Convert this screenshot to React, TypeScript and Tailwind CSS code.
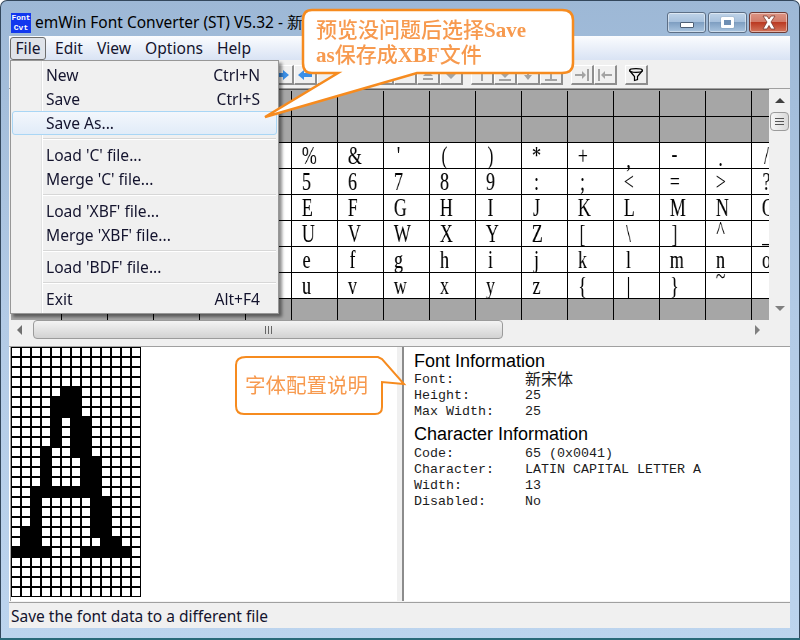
const sansFont = "font-['Noto_Sans',sans-serif]";

const gridChars = [
  " !\"#$%&'()*+,-./",
  "0123456789:;<=>?",
  "@ABCDEFGHIJKLMNO",
  "PQRSTUVWXYZ[\\]^_",
  "`abcdefghijklmno",
  "pqrstuvwxyz{|}~ ",
];

// these sit higher or lower in the bitmap font
const glyphShift: Record<string, string> = {
  "~": "-translate-y-[10px]",
  "^": "-translate-y-[3px]",
  ",": "translate-y-[4px]",
  ".": "translate-y-[2px]",
  "-": "-translate-y-[2px]",
};

// black pixels of the "A" preview, by row
const glyphA: Record<number, number[]> = {
  4: [5, 6],
  5: [4, 5, 6],
  6: [4, 5, 6],
  7: [4, 6, 7],
  8: [4, 6, 7],
  9: [4, 6, 7],
  10: [3, 6, 7],
  11: [3, 7, 8],
  12: [3, 7, 8],
  13: [3, 7, 8],
  14: [2, 3, 4, 5, 6, 7, 8],
  15: [2, 8, 9],
  16: [2, 8, 9],
  17: [2, 8, 9],
  18: [1, 2, 8, 9],
  19: [1, 2, 9, 10],
  20: [0, 1, 2, 3, 7, 8, 9, 10, 11],
};

const menu = [
  [["New", "Ctrl+N"], ["Save", "Ctrl+S"], ["Save As...", ""]],
  [["Load 'C' file...", ""], ["Merge 'C' file...", ""]],
  [["Load 'XBF' file...", ""], ["Merge 'XBF' file...", ""]],
  [["Load 'BDF' file...", ""]],
  [["Exit", "Alt+F4"]],
];

const toolPaths: Record<string, string> = {
  right: "M1 5h8V2l6 5-6 5V9H1z",
  left: "M15 5H7V2L1 7l6 5V9h8z",
  blank: "",
  upBar: "M8 3l5 5H3zM3 10h10v2H3z",
  downBar: "M3 2h10v2H3zM3 6h10l-5 5z",
  top: "M2 1h12v2H2zM7 3h2v10H7z",
  down2: "M7 1h2v5h3l-4 4-4-4h3zM2 11h12v2H2z",
  down: "M7 1h2v6h3l-4 5-4-5h3z",
  bottom: "M7 1h2v10H7zM2 11h12v2H2z",
  toRight: "M1 6h7V3l4 4-4 4V8H1zM13 1h2v12h-2z",
  toLeft: "M1 1h2v12H1zM15 6H8V3L4 7l4 4V8h7z",
};

const toolGroups = [
  [["right", "#3b8fe6"], ["left", "#3b8fe6"], ["blank", ""]],
  [["blank", ""], ["blank", ""], ["blank", ""], ["upBar", "#a3a3a3"], ["downBar", "#a3a3a3"]],
  [["top", "#a3a3a3"], ["down2", "#a3a3a3"], ["down", "#a3a3a3"], ["bottom", "#a3a3a3"]],
  [["toRight", "#a3a3a3"], ["toLeft", "#a3a3a3"]],
];

function ToolButton({ children }: { children?: React.ReactNode }) {
  return (
    <div className="flex h-5 w-[23px] items-center justify-center border-t border-l border-t-white border-l-white border-r-2 border-b-2 border-r-[#8e8e8e] border-b-[#8e8e8e] bg-[#f0f0f0]">
      {children}
    </div>
  );
}

function Toolbar() {
  return (
    <div className="flex h-[29px] gap-2 border-b border-[#a0a0a0] bg-[#f0f0f0] pt-[5px] pl-[262px]">
      {toolGroups.map((group, i) => (
        <div key={i} className="flex">
          {group.map(([icon, color], j) => (
            <ToolButton key={j}>
              {icon !== "blank" && (
                <svg width="16" height="14" viewBox="0 0 16 14">
                  <path d={toolPaths[icon]} fill={color} />
                </svg>
              )}
            </ToolButton>
          ))}
        </div>
      ))}
      <ToolButton>
        <svg width="16" height="16" viewBox="0 0 16 16" fill="none" stroke="#000" strokeWidth="1.2">
          <ellipse cx="8" cy="3.500" rx="6.500" ry="1.800" />
          <path d="M1.500 3.500L6.500 9.500V13.500L9.500 12.500V9.500L14.500 3.500" />
        </svg>
      </ToolButton>
    </div>
  );
}

function CharGrid() {
  const rows = [null, null, ...gridChars, null];
  return (
    <div className="h-[231px] w-[758px] overflow-hidden border-t border-[#5a5a5a] bg-[#a6a6a6]">
      <div className="h-px" />
      {rows.map((row, r) => (
        <div key={r} className={`flex h-[26px] w-[800px] border-b border-black ${row ? "bg-white" : "bg-[#a6a6a6]"}`}>
          <div className="w-[51px] shrink-0 border-r border-black" />
          {Array.from({ length: 16 }).map((_, c) => (
            <div key={c} className="h-full w-[46px] shrink-0 border-r border-black">
              {row && (
                <span
                  className={`ml-2 inline-block w-[13px] scale-x-[0.72] text-center font-['Liberation_Serif',serif] text-[25px] leading-[26px] whitespace-pre text-black will-change-transform ${glyphShift[row[c]] ?? ""}`}
                >
                  {row[c]}
                </span>
              )}
            </div>
          ))}
        </div>
      ))}
    </div>
  );
}

function VScroll() {
  return (
    <div className="flex w-[21px] flex-col items-center bg-[#f0f0f0]">
      <div className="flex h-[23px] items-center justify-center">
        <div className="h-0 w-0 border-x-[5px] border-b-[5px] border-x-transparent border-b-[#404040]" />
      </div>
      <div className="flex h-[19px] w-[19px] flex-col items-center justify-center gap-[2px] rounded-sm border border-[#9b9b9b] bg-gradient-to-r from-[#f6f6f6] to-[#d9d9d9]">
        <div className="h-px w-[9px] bg-[#555]" />
        <div className="h-px w-[9px] bg-[#555]" />
        <div className="h-px w-[9px] bg-[#555]" />
      </div>
      <div className="flex-1" />
      <div className="flex h-[24px] items-center justify-center">
        <div className="h-0 w-0 border-x-[5px] border-t-[5px] border-x-transparent border-t-[#808080]" />
      </div>
    </div>
  );
}

function HScroll() {
  return (
    <div className="flex h-[22px] items-start bg-[#f0f0f0]">
      <div className="flex h-[19px] w-[22px] items-center pl-[6px]">
        <div className="h-0 w-0 border-y-[5px] border-r-[5px] border-y-transparent border-r-[#707070]" />
      </div>
      <div className="flex h-[19px] w-[470px] items-center justify-center gap-[2px] rounded-sm border border-[#9b9b9b] bg-gradient-to-b from-[#f4f4f4] to-[#d2d2d2]">
        <div className="h-[8px] w-px bg-[#666]" />
        <div className="h-[8px] w-px bg-[#666]" />
        <div className="h-[8px] w-px bg-[#666]" />
      </div>
      <div className="flex-1" />
      <div className="mr-[21px] flex h-[19px] w-6 items-center justify-center">
        <div className="h-0 w-0 border-y-[5px] border-l-[5px] border-y-transparent border-l-[#808080]" />
      </div>
    </div>
  );
}

function Bitmap() {
  return (
    <div className="grid w-[130px] grid-cols-[repeat(13,8px)] gap-[2px] self-start bg-black p-px">
      {Array.from({ length: 25 * 13 }).map((_, i) => {
        const row = Math.floor(i / 13);
        const on = glyphA[row]?.includes(i % 13);
        return <div key={i} className={`h-2 w-2 ${on ? "bg-black" : "bg-white"}`} />;
      })}
    </div>
  );
}

function InfoRow({ label, value, cjk }: { label: string; value: string; cjk?: boolean }) {
  return (
    <div className="flex h-4 items-center font-['Liberation_Mono',monospace] text-[13.33px] leading-4 text-[#1c1c1c]">
      <span className="w-[111px] shrink-0 whitespace-pre">{label}</span>
      <span className={cjk ? "-translate-y-[2px] font-['Noto_Sans_CJK_SC',sans-serif] text-base" : "whitespace-pre"}>{value}</span>
    </div>
  );
}

function InfoPane() {
  const heading = "font-['Liberation_Sans',sans-serif] text-lg leading-5 text-black";
  return (
    <div className="flex-1 border-l-2 border-[#8c8c8c] bg-white pt-1 pl-[10px]">
      <div className={`${heading} mb-px`}>Font Information</div>
      <InfoRow label="Font:" value="新宋体" cjk />
      <InfoRow label="Height:" value="25" />
      <InfoRow label="Max Width:" value="25" />
      <div className={`${heading} mt-1 mb-[2px]`}>Character Information</div>
      <InfoRow label="Code:" value="65 (0x0041)" />
      <InfoRow label="Character:" value="LATIN CAPITAL LETTER A" />
      <InfoRow label="Width:" value="13" />
      <InfoRow label="Disabled:" value="No" />
    </div>
  );
}

function FileMenu() {
  return (
    <div className={`absolute top-[60px] left-[10px] flex h-[254px] w-[269px] flex-col border border-[#979797] bg-[#f0f0f0] pt-[2px] shadow-[3px_3px_3px_rgba(0,0,0,0.45)] ${sansFont}`}>
      <div className="absolute top-0 bottom-0 left-[30px] w-[2px] border-l border-[#e2e3e3] bg-white" />
      {menu.map((group, g) => (
        <div key={g} className="relative">
          {g > 0 && <div className="my-[3px] ml-[32px] mr-[2px] h-[2px] border-t border-[#d7d7d7] bg-white" />}
          {group.map(([label, shortcut]) => (
            <div
              key={label}
              className={`mx-px flex h-6 items-center justify-between pt-px text-[15.600px] text-[#14142e] ${
                label === "Save As..."
                  ? "rounded-[3px] border border-[#a9d6f5] bg-gradient-to-b from-[#f3f7fc] to-[#e1ecf8] pr-4 pl-[33px]"
                  : "pr-[17px] pl-[34px]"
              }`}
            >
              <span>{label}</span>
              <span>{shortcut}</span>
            </div>
          ))}
        </div>
      ))}
    </div>
  );
}

function WindowButtons() {
  const base = "flex h-[21px] w-[39px] items-center justify-center rounded-[3px] border shadow-[inset_0_0_0_1px_rgba(255,255,255,0.45)]";
  const blue = "border-[#5d6f86] bg-[linear-gradient(#c0d4e9_0%,#a6c0dc_48%,#7f9fc2_50%,#a9c4df_100%)]";
  return (
    <div className="flex gap-[2px] pt-[11px]">
      <div className={`${base} ${blue}`}>
        <div className="mt-[4px] h-[6px] w-[14px] rounded-[1px] border border-[#4d5f75] bg-white" />
      </div>
      <div className={`${base} ${blue}`}>
        <div className="flex h-[11px] w-[13px] items-center justify-center rounded-[1px] bg-white shadow-[0_0_1px_#4d5f75]">
          <div className="h-[5px] w-[7px] bg-[#6f8fb3]" />
        </div>
      </div>
      <div className={`${base} border-[#6e3b35] bg-[linear-gradient(#dc9484_0%,#d17a68_48%,#bb3a22_50%,#d3755c_100%)]`}>
        <svg width="18" height="15" viewBox="0 0 18 15">
          <path d="M3 1h4l2 3 2-3h4l-4 6 4 7h-4l-2-3.500L7 14H3l4-7z" fill="#fff" stroke="#7a3a30" strokeWidth="0.8" />
        </svg>
      </div>
    </div>
  );
}

function Callouts() {
  return (
    <>
      <svg className="pointer-events-none absolute top-0 left-0" width="800" height="640" viewBox="0 0 800 640">
        <path
          d="M312 10H562Q573 10 573 20V63Q573 73 562 73H417L265 117L338 73H312Q303 73 303 63V20Q303 10 312 10Z"
          fill="#fff"
          stroke="#f68b1f"
          strokeWidth="2.500"
        />
        <path
          d="M246 357H378L382 359L404 384L382 382V407Q382 414 375 414H244Q236 414 236 406V365Q236 357 246 357Z"
          fill="#fff"
          stroke="#f68b1f"
          strokeWidth="2"
        />
      </svg>
      <div className="absolute top-[18px] left-[316px] w-[230px] font-['Liberation_Serif','Noto_Sans_CJK_SC',serif] text-[21px] leading-[25px] font-medium text-[#f79a4f]">
        <div className="whitespace-nowrap">
          预览没问题后选择<span className="font-bold">Save</span>
        </div>
        <div className="whitespace-nowrap">
          <span className="font-bold">as</span>保存成<span className="font-bold">XBF</span>文件
        </div>
      </div>
      <div className="absolute top-[371px] left-[245px] font-['Noto_Sans_CJK_SC',sans-serif] text-[20.500px] leading-[26px] whitespace-nowrap text-[#f79a4f]">
        字体配置说明
      </div>
    </>
  );
}

export default function App() {
  return (
    <div className="relative h-[640px] w-[800px] overflow-hidden">
      <div className="flex h-full flex-col rounded-t-[7px] border border-b-0 border-[#33475c] bg-gradient-to-b from-[#9db8d6] via-[#b3cbe6] to-[#bcd4ee] pr-[9px] pl-2">
        {/* title bar */}
        <div className="flex h-[35px] shrink-0 justify-between">
          <div className={`flex items-center gap-1 pt-[9px] pl-[2px] ${sansFont}`}>
            <div className="h-5 w-5 bg-[#1238ee] text-center font-['Liberation_Mono',monospace] text-[8px] leading-[10px] font-bold text-white">
              <div>Font</div>
              <div>Cvt</div>
            </div>
            <span className="text-[15.500px] whitespace-nowrap text-black">emWin Font Converter (ST) V5.32 - 新宋体</span>
          </div>
          <div className="mr-[2px]">
            <WindowButtons />
          </div>
        </div>

        {/* client area */}
        <div className="flex h-[592px] shrink-0 flex-col bg-[#f0f0f0]">
          <div className={`flex h-6 items-center gap-[14px] bg-gradient-to-b from-[#fbfcfe] to-[#d9e3f4] pt-px text-[15.600px] text-[#14142e] ${sansFont}`}>
            <div className="ml-px -mr-[5px] flex h-[23px] w-9 items-center justify-center self-end rounded-[3px] border border-[#6e6e6e] bg-[#dfe3ea]">File</div>
            <span>Edit</span>
            <span>View</span>
            <span>Options</span>
            <span>Help</span>
          </div>
          <Toolbar />
          <div className="flex pl-[2px]">
            <CharGrid />
            <VScroll />
          </div>
          <div className="pl-[2px]">
            <HScroll />
          </div>
          <div className="h-1 bg-[#f0f0f0]" />
          <div className="flex h-[255px] border-t border-[#a0a0a0] bg-white">
            <div className="ml-px flex w-[387px] shrink-0 border-l border-[#a0a0a0] bg-white">
              <Bitmap />
            </div>
            <div className="w-[5px] shrink-0 bg-[#f0f0f0]" />
            <InfoPane />
          </div>
          <div className="h-px bg-[#f4f4f4]" />
          <div className="h-px bg-[#a0a0a0]" />
          <div className={`flex h-[25px] items-center pt-[3px] pl-[2px] text-[15.500px] text-[#14142e] ${sansFont}`}>
            Save the font data to a different file
          </div>
        </div>
        <div className="flex-1" />
      </div>
      <div className="absolute right-0 bottom-0 left-0 h-[2px] bg-[#2a6a7a]" />
      <FileMenu />
      <Callouts />
    </div>
  );
}
